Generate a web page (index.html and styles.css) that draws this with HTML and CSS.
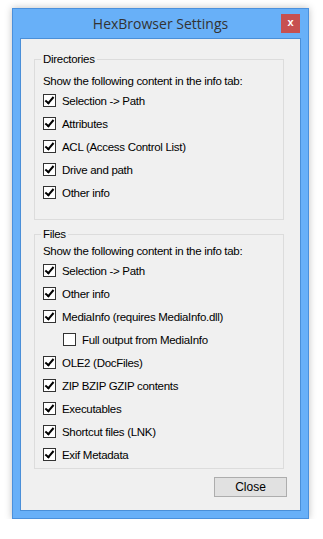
FILE: index.html
```html
<!DOCTYPE html>
<html lang="en">
<head>
  <meta charset="UTF-8">
  <meta name="viewport" content="width=device-width, initial-scale=1.0">
  <title>HexBrowser Settings</title>
  <link rel="stylesheet" href="styles.css">
</head>
<body>
  <div class="window">
    <!-- Заголовок окна -->
    <div class="titlebar">
      <span></span>
      <span class="title">HexBrowser Settings</span>
      <span class="close-x">x</span>
    </div>

    <div class="client">
      <!-- Папки -->
      <fieldset class="group group-dirs">
        <legend>Directories</legend>
        <div class="hint">Show the following content in the info tab:</div>
        <label class="row"><span class="box checked"></span>Selection -&gt; Path</label>
        <label class="row"><span class="box checked"></span>Attributes</label>
        <label class="row"><span class="box checked"></span>ACL (Access Control List)</label>
        <label class="row"><span class="box checked"></span>Drive and path</label>
        <label class="row"><span class="box checked"></span>Other info</label>
      </fieldset>

      <!-- Файлы -->
      <fieldset class="group group-files">
        <legend>Files</legend>
        <div class="hint">Show the following content in the info tab:</div>
        <label class="row"><span class="box checked"></span>Selection -&gt; Path</label>
        <label class="row"><span class="box checked"></span>Other info</label>
        <label class="row"><span class="box checked"></span>MediaInfo (requires MediaInfo.dll)</label>
        <label class="row sub"><span class="box"></span>Full output from MediaInfo</label>
        <label class="row"><span class="box checked"></span>OLE2 (DocFiles)</label>
        <label class="row"><span class="box checked"></span>ZIP BZIP GZIP contents</label>
        <label class="row"><span class="box checked"></span>Executables</label>
        <label class="row"><span class="box checked"></span>Shortcut files (LNK)</label>
        <label class="row"><span class="box checked"></span>Exif Metadata</label>
      </fieldset>

      <div class="actions">
        <button class="btn">Close</button>
      </div>
    </div>
  </div>
</body>
</html>
```

FILE: styles.css
```css
/* Общие стили */
body {
  margin: 0;
  background-color: #ffffff;
  font-family: 'Liberation Sans', Arial, sans-serif;
  font-size: 11.5px;
  letter-spacing: -0.3px;
  color: #000;
}

/* Окно */
.window {
  margin: 8px 0 0 12px;
  border: 1px solid #4a90dc;
  background-color: #68b0f8;
  padding: 0 7px 7px;
  width: 281px;
  box-shadow: 0 0 7px rgba(0, 0, 0, 0.25);
}

.titlebar {
  height: 29px;
  display: grid;
  grid-template-columns: 1fr auto 1fr;
  align-items: start;
}

.title {
  font-family: 'Open Sans', sans-serif;
  font-size: 14px;
  letter-spacing: 0;
  color: #333;
  line-height: 29px;
}

.close-x {
  justify-self: end;
  margin-top: 5px;
  margin-right: 1px;
  width: 19px;
  height: 19px;
  background-color: #c75050;
  color: #fff;
  font-weight: bold;
  font-size: 11px;
  letter-spacing: 0;
  line-height: 17px;
  text-align: center;
}

/* Клиентская область */
.client {
  background-color: #f0f0f0;
  border: 1px solid #4a8fd8;
  padding: 12px 13px 13px;
}

/* Группы */
.group {
  margin: 0 3px 0 0;
  border: 1px solid #dcdcdc;
  padding: 7px 0 15px 8px;
}

.group legend {
  padding: 0 2px;
  margin-left: -2px;
  line-height: 16px;
}

.group-files {
  margin-top: 6px;
  padding-top: 2px;
  padding-bottom: 2px;
}

.hint {
  line-height: 15px;
}

.row {
  display: flex;
  align-items: center;
  height: 23px;
}

.row.sub {
  padding-left: 20px;
}

/* Чекбоксы */
.box {
  width: 11px;
  height: 11px;
  border: 1px solid #333;
  background-color: #fff;
  margin-right: 6px;
  flex: none;
  position: relative;
}

.box.checked::after {
  content: "";
  position: absolute;
  left: 3px;
  top: 0;
  width: 3px;
  height: 7px;
  border-right: 2px solid #000;
  border-bottom: 2px solid #000;
  transform: rotate(40deg);
}

/* Кнопка */
.actions {
  display: flex;
  justify-content: flex-end;
  margin-top: 8px;
}

.btn {
  width: 73px;
  height: 20px;
  border: 1px solid #adadad;
  background-color: #e1e1e1;
  font-family: 'Liberation Sans', Arial, sans-serif;
  font-size: 12px;
  color: #000;
  padding: 0;
}
```
